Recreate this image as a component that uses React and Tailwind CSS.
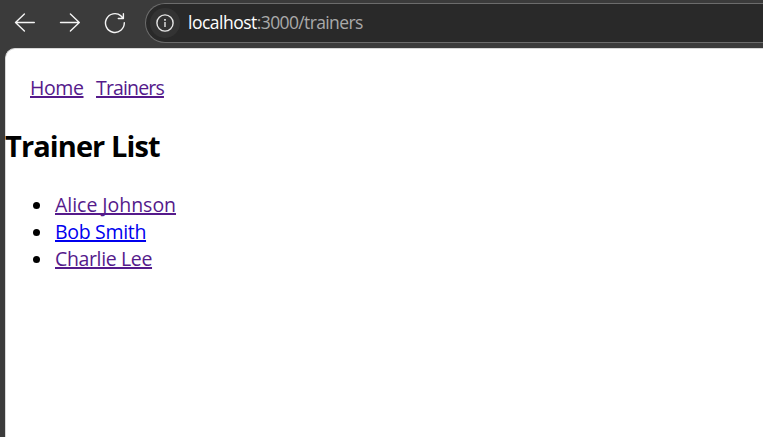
const trainers = [
  { name: 'Alice Johnson', style: 'text-[#551a8b] tracking-[-0.03px]' },
  { name: 'Bob Smith', style: 'text-[#0000ee] tracking-[-0.32px]' },
  { name: 'Charlie Lee', style: 'text-[#551a8b] tracking-[-0.36px]' },
];

const linkBase = 'underline decoration-2 underline-offset-1 [text-decoration-skip-ink:none]';

function Toolbar() {
  return (
    <header className="flex h-12 shrink-0 pt-[3px]">
      <div className="flex h-10 w-[145px] shrink-0 items-center">
        <svg className="ml-[14px] shrink-0" width="22" height="22" viewBox="0 0 22 22" fill="none" stroke="#f5f5f5" strokeWidth="1.4" strokeLinecap="round" strokeLinejoin="round">
          <path d="M20.3 10.5H1.5M10.4 2.1L1.5 10.5L10.4 18.9" />
        </svg>
        <svg className="ml-[23px] shrink-0" width="22" height="22" viewBox="0 0 22 22" fill="none" stroke="#f5f5f5" strokeWidth="1.4" strokeLinecap="round" strokeLinejoin="round">
          <path d="M1.5 10.5H20.3M11.4 2.1L20.3 10.5L11.4 18.9" />
        </svg>
        <svg className="ml-[23px] shrink-0" width="22" height="22" viewBox="0 0 22 22" fill="none" stroke="#f5f5f5" strokeWidth="1.4" strokeLinecap="round" strokeLinejoin="round">
          <path d="M20.3 10.8A9.4 9.4 0 1 1 17 3.9L19.2 6.2M19.4 1.7V6.5H14.3" />
        </svg>
      </div>
      <div className="flex h-10 flex-1 items-center rounded-l-full border border-r-0 border-[#6c6c6c] bg-[#292929] pl-[4px]">
        <div className="flex size-[30px] items-center justify-center rounded-full bg-[#333333]">
          <svg width="18" height="18" viewBox="0 0 18 18" fill="none" stroke="#e6e6e6" strokeWidth="1.4">
            <circle cx="9" cy="9" r="8.1" />
            <path d="M9 8V13" />
            <path d="M9 5V6.7" strokeWidth="1.7" />
          </svg>
        </div>
        <div className="-mt-[2px] ml-[8px] whitespace-nowrap text-[17.5px] leading-6 tracking-[-0.63px] text-[#aaaaaa]">
          <span className="tracking-[-0.5px] text-white">localhost</span>:3000/trainers
        </div>
      </div>
    </header>
  );
}

export default function App() {
  return (
    <div className="flex h-[437px] w-[763px] flex-col overflow-hidden bg-[#3b3b3b] font-['Open_Sans','Noto_Sans',sans-serif]">
      <Toolbar />
      <main className="ml-[5px] flex-1 rounded-tl-[10px] border-l border-t border-[#d8d8d8] bg-white text-[19.5px] leading-[27px] text-black">
        <nav className="flex gap-[12.5px] pl-6 pt-[25px] text-[#551a8b]">
          <a className={`${linkBase} tracking-[-0.4px]`}>Home</a>
          <a className={`${linkBase} tracking-[-0.84px]`}>Trainers</a>
        </nav>
        <h2 className="-ml-px mt-[25px] text-[29px] font-bold leading-10 tracking-[-0.9px]">Trainer List</h2>
        <ul className="mt-[25px] pl-[27px]">
          {trainers.map((trainer) => (
            <li key={trainer.name} className="flex items-center">
              <span className="mr-[15px] mt-px size-[7px] rounded-full bg-black" />
              <a className={`${linkBase} ${trainer.style}`}>{trainer.name}</a>
            </li>
          ))}
        </ul>
      </main>
    </div>
  );
}
